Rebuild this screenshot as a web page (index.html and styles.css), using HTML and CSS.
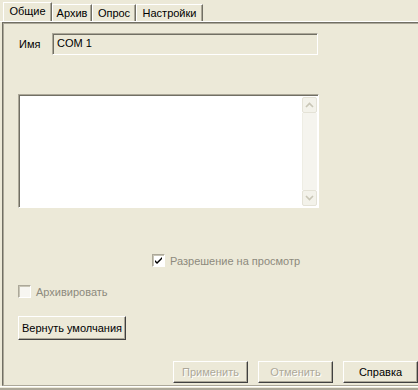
FILE: index.html
```html
<!DOCTYPE html>
<html lang="ru">
<head>
    <meta charset="UTF-8">
    <meta name="viewport" content="width=device-width, initial-scale=1.0">
    <title>Свойства порта</title>
    <link rel="stylesheet" href="styles.css">
</head>
<body>
    <section class="Dialog">
        <div class="Tab-Bar">
            <span class="Tab Active" style="width:49px">Общие</span>
            <span class="Tab" style="width:40px">Архив</span>
            <span class="Tab" style="width:44px">Опрос</span>
            <span class="Tab" style="width:67px">Настройки</span>
        </div>
        <div class="Page">
            <div class="Name-Row">
                <label for="Name">Имя</label>
                <div class="Name-Field" id="Name">COM 1</div>
            </div>

            <div class="Memo">
                <div class="Memo-Text"></div>
                <div class="Scroll">
                    <span class="Scroll-Btn">
                        <svg width="9" height="6" viewBox="0 0 9 6"><path d="M1 5 L4.5 1.5 L8 5" fill="none" stroke="#c9c6b6" stroke-width="1.6"/></svg>
                    </span>
                    <span class="Scroll-Track"></span>
                    <span class="Scroll-Btn">
                        <svg width="9" height="6" viewBox="0 0 9 6"><path d="M1 1 L4.5 4.5 L8 1" fill="none" stroke="#c9c6b6" stroke-width="1.6"/></svg>
                    </span>
                </div>
            </div>

            <div class="Check-Row View">
                <span class="Box">
                    <svg width="9" height="9" viewBox="0 0 9 9"><path d="M1 4 L3 6 L8 1 L8 3 L3 8 L1 6 Z" fill="#000"/></svg>
                </span>
                <span>Разрешение на просмотр</span>
            </div>

            <div class="Check-Row Archive">
                <span class="Box"></span>
                <span>Архивировать</span>
            </div>

            <button class="Btn Defaults">Вернуть умолчания</button>

            <div class="Footer">
                <button class="Btn" disabled>Применить</button>
                <button class="Btn" disabled>Отменить</button>
                <button class="Btn">Справка</button>
            </div>
        </div>
        <div class="Bottom-Line"></div>
    </section>
</body>
</html>
```

FILE: styles.css
```css
*{
    box-sizing: border-box;
    padding: 0;
    margin: 0;
    font-family: "Liberation Sans", Arial, sans-serif;
    font-size: 11px;
}
body{
    width: 418px;
    height: 390px;
    background-color: #ece9d8;
    overflow: hidden;
}
.Dialog{
    width: 418px;
    height: 390px;
    display: flex;
    flex-direction: column;
}

/* tabs */
.Tab-Bar{
    height: 22px;
    display: flex;
    align-items: flex-end;
    padding-left: 3px;
    border-bottom: 1px solid #fff;
}
.Tab{
    height: 17px;
    display: flex;
    align-items: center;
    justify-content: center;
    color: #000;
    border-top: 1px solid #fff;
    border-left: 1px solid #fff;
    border-right: 1px solid #716f64;
    box-shadow: inset -1px 0 #aca899;
}
.Tab.Active{
    height: 19px;
    padding-bottom: 2px;
}

/* page */
.Page{
    flex: 1;
    margin-left: 2px;
    padding: 10px 0 0 15px;
    border-top: 1px solid #716f64;
    border-left: 1px solid #716f64;
    border-bottom: 1px solid #aca899;
    box-shadow: inset 1px 1px #aca899;
    display: flex;
    flex-direction: column;
    align-items: flex-start;
}
.Name-Row{
    display: flex;
    align-items: center;
    height: 22px;
}
.Name-Row label{
    width: 34px;
    padding-left: 1px;
    color: #000;
}
.Name-Field{
    width: 266px;
    height: 22px;
    padding: 0 4px 2px;
    display: flex;
    align-items: center;
    border-top: 1px solid #aca899;
    border-left: 1px solid #aca899;
    border-right: 1px solid #fff;
    border-bottom: 1px solid #fff;
    box-shadow: inset 1px 1px #716f64;
}

.Memo{
    margin-top: 39px;
    width: 301px;
    height: 114px;
    display: flex;
    background-color: #fff;
    border-top: 1px solid #aca899;
    border-left: 1px solid #aca899;
    border-right: 1px solid #fff;
    border-bottom: 1px solid #fff;
    box-shadow: inset 1px 1px #716f64;
}
.Memo-Text{
    flex: 1;
}
.Scroll{
    width: 16px;
    padding: 2px 1px 1px 0;
    display: flex;
    flex-direction: column;
}
.Scroll-Btn{
    height: 16px;
    display: flex;
    align-items: center;
    justify-content: center;
    background-color: #f3f2ea;
    border: 1px solid #e4e2d6;
    border-radius: 2px;
}
.Scroll-Track{
    flex: 1;
    background-color: #f5f4ee;
    border-left: 1px solid #eeede4;
}

/* checkboxes */
.Check-Row{
    display: flex;
    align-items: center;
    height: 13px;
    color: #8d8a7d;
}
.Check-Row.View{
    margin: 46px 0 0 134px;
}
.Check-Row.Archive{
    margin-top: 18px;
}
.Box{
    width: 13px;
    height: 13px;
    margin-right: 5px;
    display: flex;
    align-items: center;
    justify-content: center;
    background-color: #fff;
    border-top: 1px solid #aca899;
    border-left: 1px solid #aca899;
    border-right: 1px solid #fff;
    border-bottom: 1px solid #fff;
    box-shadow: inset 1px 1px #c8c5b6, 0 0 0 0 transparent;
}
.Archive .Box{
    background-color: #f7f6f1;
}

/* buttons */
.Btn{
    height: 23px;
    background-color: #ece9d8;
    color: #000;
    border-top: 1px solid #fff;
    border-left: 1px solid #fff;
    border-right: 1px solid #404040;
    border-bottom: 1px solid #404040;
    box-shadow: inset -1px -1px #aca899;
    padding-bottom: 1px;
}
.Btn:disabled{
    color: #aca899;
    text-shadow: 1px 1px #fff;
}
.Btn.Defaults{
    margin-top: 18px;
    width: 108px;
    height: 24px;
}
.Footer{
    margin-top: 21px;
    align-self: flex-end;
    display: flex;
    gap: 10px;
}
.Footer .Btn{
    width: 75px;
    height: 22px;
}
.Bottom-Line{
    height: 4px;
    border-top: 1px solid #fff;
    border-bottom: 2px solid #aca899;
}
```
